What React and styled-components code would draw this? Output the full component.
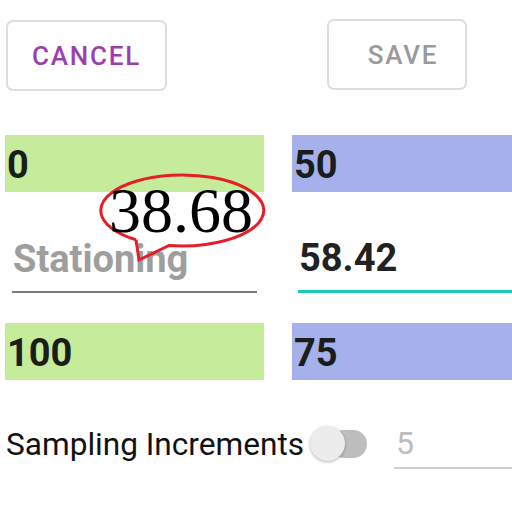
import React from "react";
import styled, { createGlobalStyle } from "styled-components";

const GlobalStyle = createGlobalStyle`
  html, body {
    margin: 0;
    padding: 0;
    background: #fff;
  }
  body {
    font-family: Roboto, "Liberation Sans", sans-serif;
    overflow: hidden;
  }
`;

const App = () => {
  return (
    <Page>
      <GlobalStyle />
      <TopBar>
        <OutlineButton $tone="#9c3fae" $width={161}>
          Cancel
        </OutlineButton>
        <OutlineButton $tone="#9a9a9a" $width={140} $shift={12}>
          Save
        </OutlineButton>
      </TopBar>

      <RangeGrid>
        <ValueBar $color="#c6eb9b">0</ValueBar>
        <ValueBar $color="#a6b1eb">50</ValueBar>

        <Field $inset="7px">
          <FieldText $placeholder>Stationing</FieldText>
        </Field>
        <Field $inset="6px" $active>
          <FieldText>58.42</FieldText>
        </Field>

        <ValueBar $color="#c6eb9b" $top={30}>
          100
        </ValueBar>
        <ValueBar $color="#a6b1eb" $top={30}>
          75
        </ValueBar>

        <Bubble>
          <svg width="172" height="96" viewBox="96 168 172 96">
            <path
              d="M 135 236.7 L 138 257 L 168 242.5 A 81.5 35.5 0 1 0 135 236.7"
              fill="none"
              stroke="#e61e28"
              strokeWidth="3"
              strokeLinejoin="miter"
            />
          </svg>
          <BubbleText>38.68</BubbleText>
        </Bubble>
      </RangeGrid>

      <SampleRow>
        <SampleLabel>Sampling Increments</SampleLabel>
        <Toggle>
          <ToggleTrack />
          <ToggleThumb />
        </Toggle>
        <SampleField>5</SampleField>
      </SampleRow>
    </Page>
  );
};

const Page = styled.div`
  width: 512px;
  height: 512px;
  overflow: hidden;
`;

const TopBar = styled.div`
  display: flex;
  justify-content: space-between;
  align-items: flex-start;
  padding: 19px 45px 0 6px;
`;

const OutlineButton = styled.button`
  box-sizing: border-box;
  width: ${(p) => p.$width}px;
  height: 71px;
  margin-top: ${(p) => (p.$shift ? 0 : 1)}px;
  padding: 0 0 0 ${(p) => p.$shift || 0}px;
  background: #fff;
  border: 2px solid #dedede;
  border-radius: 7px;
  color: ${(p) => p.$tone};
  font-family: Roboto, "Liberation Sans", sans-serif;
  font-weight: 500;
  font-size: 26px;
  letter-spacing: 1.8px;
  text-transform: uppercase;
`;

const RangeGrid = styled.div`
  position: relative;
  display: grid;
  grid-template-columns: 259px 1fr;
  column-gap: 28px;
  padding-left: 5px;
  margin-top: 44px;
`;

const ValueBar = styled.div`
  height: 57px;
  margin-top: ${(p) => p.$top || 0}px;
  background: ${(p) => p.$color};
  color: #1a1d1a;
  font-weight: 700;
  font-size: 38px;
  line-height: 60px;
  padding-left: 2px;
`;

const Field = styled.div`
  box-sizing: border-box;
  height: 101px;
  margin: 0 ${(p) => (p.$active ? 0 : p.$inset)} 0 ${(p) => p.$inset};
  display: flex;
  align-items: flex-end;
  padding-bottom: 12px;
  border-bottom: ${(p) => (p.$active ? "3px solid #1ec9b7" : "2px solid #7a7a7a")};
`;

const FieldText = styled.span`
  font-weight: 700;
  font-size: 38px;
  line-height: 40px;
  padding-left: 1px;
  color: ${(p) => (p.$placeholder ? "#9e9e9e" : "#222")};
`;

/* annotation callout drawn over the fields */
const Bubble = styled.div`
  position: absolute;
  left: 97px;
  top: 36px;
  width: 172px;
  height: 96px;
  svg {
    position: absolute;
    left: 0;
    top: 0;
  }
`;

const BubbleText = styled.div`
  position: absolute;
  left: 12px;
  top: 8px;
  font-family: "Liberation Serif", "Times New Roman", serif;
  font-size: 64px;
  line-height: 64px;
  color: #000;
`;

const SampleRow = styled.div`
  display: flex;
  align-items: center;
  padding-left: 6px;
  margin-top: 39px;
  height: 50px;
`;

const SampleLabel = styled.span`
  font-size: 31.6px;
  color: #111;
  white-space: nowrap;
`;

const Toggle = styled.div`
  position: relative;
  width: 62px;
  height: 36px;
  margin-left: 6px;
  flex-shrink: 0;
`;

const ToggleTrack = styled.div`
  position: absolute;
  left: 20px;
  top: 4px;
  width: 37px;
  height: 28px;
  border-radius: 14px;
  background: #bdbdbd;
`;

const ToggleThumb = styled.div`
  position: absolute;
  left: 0;
  top: 0;
  width: 35px;
  height: 35px;
  border-radius: 50%;
  background: #ececec;
  box-shadow: 0 1px 3px rgba(0, 0, 0, 0.3);
`;

const SampleField = styled.div`
  flex: 1;
  align-self: flex-start;
  box-sizing: border-box;
  height: 50px;
  margin-left: 22px;
  padding: 6px 0 0 2px;
  border-bottom: 2px solid #cfcfcf;
  font-size: 32px;
  line-height: 36px;
  color: #bdbdbd;
`;

export default App;
